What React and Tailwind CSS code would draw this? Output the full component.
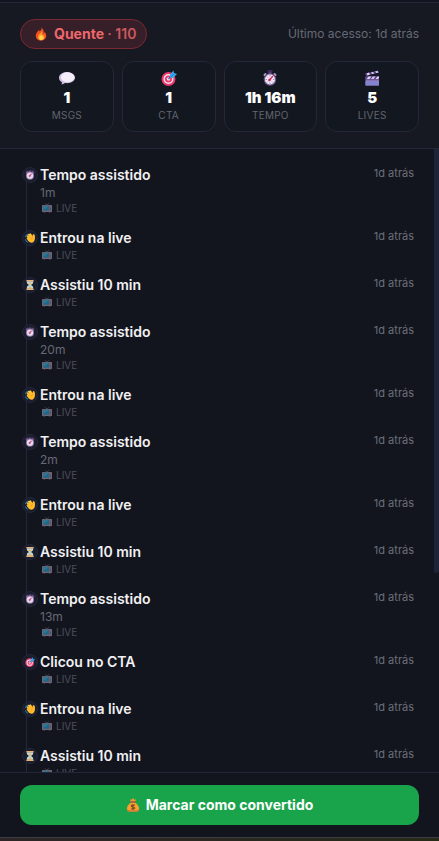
import React from 'react';

const FireIcon = ({ className }) => (
  <svg viewBox="0 0 32 32" className={className} aria-hidden="true">
    <path d="M17 1c1 4-1 6-4 9-1-1-1-3-1-4-4 4-8 8-8 14 0 7 5 11 12 11s12-4 12-11c0-4-2-7-4-9 0 2-1 3-2 4 1-6-1-11-5-14z" fill="#f4511e" />
    <path d="M17 9c0 4-3 6-6 8-1 2-2 3-2 6 0 4 3 7 7 7s8-3 8-7c0-3-1-5-2-6-1 2-2 2-3 2 1-4 0-8-2-10z" fill="#ff9a2e" />
    <path d="M16 17c0 3-4 4-4 8 0 3 2 5 4 5s6-2 6-5-3-3-4-5c0-1-1-2-2-3z" fill="#ffd54a" />
  </svg>
);

const SpeechIcon = ({ className }) => (
  <svg viewBox="0 0 32 32" className={className} aria-hidden="true">
    <path d="M16 4C7 4 0 9 0 15.500c0 4 2.500 7 6 9 0 1.500-1 3-1 4 2 0 5-1 7-2.500 1 .2 2.500.3 4 .3 9 0 16-4.800 16-10.800S25 4 16 4z" fill="#cfc0e6" />
    <path d="M17 5C9 5 4 9 4 14.500S10 24 17 24s14-4 14-9S25 5 17 5z" fill="#f3eef8" />
  </svg>
);

const TargetIcon = ({ className }) => (
  <svg viewBox="0 0 32 32" className={className} aria-hidden="true">
    <circle cx="15" cy="18" r="14" fill="#e8386d" />
    <circle cx="15" cy="18" r="10" fill="#f6dfe8" />
    <circle cx="15" cy="18" r="7" fill="#e8386d" />
    <circle cx="15" cy="18" r="3.500" fill="#f6dfe8" />
    <path d="M15 18L26 7" stroke="#1577b8" strokeWidth="2.500" />
    <path d="M18 9l7-8 1 5 6 2-8 8-6-1z" fill="#36a9ec" />
    <path d="M20 14l6-7" stroke="#1674bd" strokeWidth="1.500" />
  </svg>
);

const StopwatchIcon = ({ className }) => (
  <svg viewBox="0 0 32 32" className={className} aria-hidden="true">
    <rect x="11" y="0" width="10" height="5" rx="1.500" fill="#3b2858" />
    <rect x="13" y="4" width="6" height="5" fill="#54397a" />
    <path d="M5 10l2-2M27 10l-2-2" stroke="#a99abb" strokeWidth="4" strokeLinecap="round" />
    <circle cx="16" cy="19" r="12.500" fill="#6d5590" />
    <circle cx="16" cy="19" r="10" fill="#f1e8f5" />
    <path d="M16 10v3M16 25v3M7 19h3M22 19h3M10 13l2 2M10 25l2-2M22 25l-2-2" stroke="#8b789e" strokeWidth="1.500" />
    <path d="M15 20l6-7" stroke="#e3265e" strokeWidth="3" strokeLinecap="round" />
    <circle cx="15" cy="20" r="2.500" fill="#b5295c" />
  </svg>
);

const ClapperIcon = ({ className }) => (
  <svg viewBox="0 0 32 32" className={className} aria-hidden="true">
    <path d="M3 14h27v16a1 1 0 0 1-1 1H4a1 1 0 0 1-1-1z" fill="#8c70b8" />
    <path d="M3 22h27v8a1 1 0 0 1-1 1H4a1 1 0 0 1-1-1z" fill="#8485cf" />
    <path d="M3 12h27v7H3z" fill="#56407c" />
    <path d="M5 18l4-5h6l-4 5zM14 18l4-5h5l-4 5zM23 18l4-5h3v3l-2 2z" fill="#ddcff5" />
    <path d="M2 7l26-6 2 4-26 7z" fill="#56407c" />
    <path d="M5 7l5-2 2 4-5 2zM14 5l4-1 3 3-5 1zM22 3l5-1 2 3-4 1z" fill="#ddcff5" />
  </svg>
);

const WaveIcon = ({ className }) => (
  <svg viewBox="0 0 32 32" className={className} aria-hidden="true">
    <path d="M2 12c0-4 3-7 6-8M2 22c1 4 3 6 6 7" stroke="#1d9be0" strokeWidth="3" fill="none" strokeLinecap="round" />
    <path d="M17 11l-5-6M21 10l-4-6M14 15l-6-5M14 21l-6-4" stroke="#ffc83d" strokeWidth="5.500" strokeLinecap="round" />
    <path d="M9 14l10-9 5 5c0-4 1-7 4-7 3 1 4 5 4 11 0 10-4 17-12 17-6 0-9-5-13-10z" fill="#ffb92b" />
    <path d="M25 13c-3 1-5 4-4 7" stroke="#e58a16" strokeWidth="2" fill="none" />
  </svg>
);

const HourglassIcon = ({ className }) => (
  <svg viewBox="0 0 32 32" className={className} aria-hidden="true">
    <path d="M6 4h20v5c0 4-6 5-6 7s6 3 6 7v5H6v-5c0-4 6-5 6-7s-6-3-6-7z" fill="#b8dced" />
    <path d="M11 9h10c0 3-4 4-4 7v5l5 6H10l5-6v-5c0-3-4-4-4-7z" fill="#f4b53f" />
    <rect x="4" y="0" width="24" height="5" rx="1.500" fill="#e8b178" />
    <rect x="4" y="27" width="24" height="5" rx="1.500" fill="#e8b178" />
  </svg>
);

const AlarmIcon = ({ className }) => (
  <svg viewBox="0 0 32 32" className={className} aria-hidden="true">
    <path d="M5 8l3-3M27 8l-3-3" stroke="#6b4c85" strokeWidth="6" strokeLinecap="round" />
    <rect x="12" y="1" width="8" height="5" fill="#5a3f75" />
    <circle cx="16" cy="18" r="13" fill="#8b74a3" />
    <circle cx="16" cy="18" r="10" fill="#e6daec" />
    <path d="M15 19l6-7" stroke="#d63b76" strokeWidth="3.500" />
    <circle cx="15" cy="19" r="3" fill="#ad4f82" />
  </svg>
);

const TvIcon = ({ className }) => (
  <svg viewBox="0 0 32 32" className={className} aria-hidden="true">
    <path d="M10 1l6 6 6-6" stroke="#8d8799" strokeWidth="2" fill="none" />
    <rect x="0" y="6" width="32" height="23" rx="2" fill="#9b8799" />
    <rect x="4" y="9" width="19" height="16" rx="1" fill="#238ab5" />
    <path d="M5 10h17L5 21z" fill="#3ca5c9" />
    <circle cx="27" cy="12" r="2" fill="#d84a65" />
    <path d="M25 18h4M25 22h4" stroke="#574b61" strokeWidth="2" />
    <path d="M5 28h5v3H5zM22 28h5v3h-5z" fill="#6c6075" />
  </svg>
);

const MoneyBagIcon = ({ className }) => (
  <svg viewBox="0 0 32 32" className={className} aria-hidden="true">
    <path d="M11 8L9 3l4 1 3-4 3 4 4-1-2 5z" fill="#f39a32" />
    <path d="M12 10C6 13 2 19 2 25c0 4 3 6 7 6h14c4 0 7-2 7-6 0-6-4-12-10-15z" fill="#f7a12f" />
    <path d="M2 25c0 4 3 6 7 6h14c4 0 7-2 7-6-3 3-8 3-14 3S5 28 2 25z" fill="#df7038" />
    <rect x="10" y="7" width="12" height="4" rx="2" fill="#b95c32" />
    <path d="M20 17c-1-2-8-2-8 1s8 2 8 5-7 3-8 1M16 14v13" stroke="#79442c" strokeWidth="2.500" fill="none" />
  </svg>
);

const stats = [
  { label: 'MSGS', value: '1', Icon: SpeechIcon },
  { label: 'CTA', value: '1', Icon: TargetIcon },
  { label: 'TEMPO', value: '1h 16m', Icon: StopwatchIcon },
  { label: 'LIVES', value: '5', Icon: ClapperIcon }
];

const eventTypes = {
  tempo: { title: 'Tempo assistido', Icon: AlarmIcon },
  entrou: { title: 'Entrou na live', Icon: WaveIcon },
  assistiu: { title: 'Assistiu 10 min', Icon: HourglassIcon },
  cta: { title: 'Clicou no CTA', Icon: TargetIcon }
};

const events = [
  { type: 'tempo', detail: '1m' },
  { type: 'entrou' },
  { type: 'assistiu' },
  { type: 'tempo', detail: '20m' },
  { type: 'entrou' },
  { type: 'tempo', detail: '2m' },
  { type: 'entrou' },
  { type: 'assistiu' },
  { type: 'tempo', detail: '13m' },
  { type: 'cta' },
  { type: 'entrou' },
  { type: 'assistiu' }
];

const StatCard = ({ label, value, Icon }) => (
  <div className="flex flex-col items-center rounded-xl border border-[#24273a] bg-[#13171f] pt-2 pb-[11px]">
    <Icon className="h-4 w-4" />
    <span className="text-[15px] leading-6 font-black text-white">{value}</span>
    <span className="text-[10px] leading-[10px] tracking-wide text-[#626570]">{label}</span>
  </div>
);

const TimelineItem = ({ type, detail }) => {
  const { title, Icon } = eventTypes[type];

  return (
    <li className="relative flex pb-[13px]">
      {/* Línea vertical */}
      <span className="absolute top-2.5 -bottom-2.5 left-1 w-px bg-[#24263b]" />
      <span className="relative mt-0.5 mr-0.5 flex h-4 w-4 shrink-0 items-center justify-center rounded-full border border-[#24263a] bg-[#1a1d2b]">
        <Icon className="h-2.5 w-2.5 shrink-0" />
      </span>
      <div className="min-w-0 flex-1">
        <p className="text-sm leading-5 font-semibold text-[#f1f1f3]">{title}</p>
        {detail && <p className="text-xs leading-4 text-[#666975]">{detail}</p>}
        <p className="flex items-center gap-1 pl-0.5 text-[10px] leading-[14px] text-[#4b4e5a]">
          <TvIcon className="h-2.5 w-2.5 opacity-70" />
          LIVE
        </p>
      </div>
      <time className="text-[11px] leading-4 text-[#6b6e79]">1d atrás</time>
    </li>
  );
};

export default function App() {
  return (
    <div className="flex h-screen flex-col overflow-hidden bg-[#13151e] font-['Inter',sans-serif]">
      <div className="h-0.5 shrink-0 bg-[#13151e]" />

      <header className="shrink-0 border-y border-[#24273a] bg-[#161922] px-5 pt-4 pb-4">
        <div className="flex items-center justify-between">
          <div className="flex h-[30px] items-center gap-1.5 rounded-full border border-[#7b2930] bg-[#371f29] pr-2.5 pl-[13px] text-sm font-bold text-[#ef686b]">
            <FireIcon className="h-3.5 w-3.5" />
            <span>
              Quente <span className="font-semibold opacity-80">· 110</span>
            </span>
          </div>
          <span className="text-xs text-[#666975]">Último acesso: 1d atrás</span>
        </div>
        <div className="mt-3 grid grid-cols-4 gap-2">
          {stats.map((stat) => (
            <StatCard key={stat.label} {...stat} />
          ))}
        </div>
      </header>

      <main className="relative min-h-0 flex-1">
        <ul className="h-full overflow-y-auto pt-4 pr-[25px] pl-[22px] [scrollbar-width:none]">
          {events.map((event, index) => (
            <TimelineItem key={index} {...event} />
          ))}
        </ul>
        <div className="absolute top-0 right-0 h-[68%] w-[5px] rounded-b-sm bg-[#202439]" />
      </main>

      <footer className="shrink-0 border-y border-t-[#24273a] border-b-[#3b3d43] px-5 py-3">
        <button
          type="button"
          className="flex h-10 w-full items-center justify-center gap-1.5 rounded-xl bg-[#19a34a] text-sm font-bold text-white"
        >
          <MoneyBagIcon className="h-3.5 w-3.5" />
          Marcar como convertido
        </button>
      </footer>

      <div className="h-[3px] shrink-0 bg-linear-to-r from-[#2d2527] to-[#252a17]" />
    </div>
  );
}
